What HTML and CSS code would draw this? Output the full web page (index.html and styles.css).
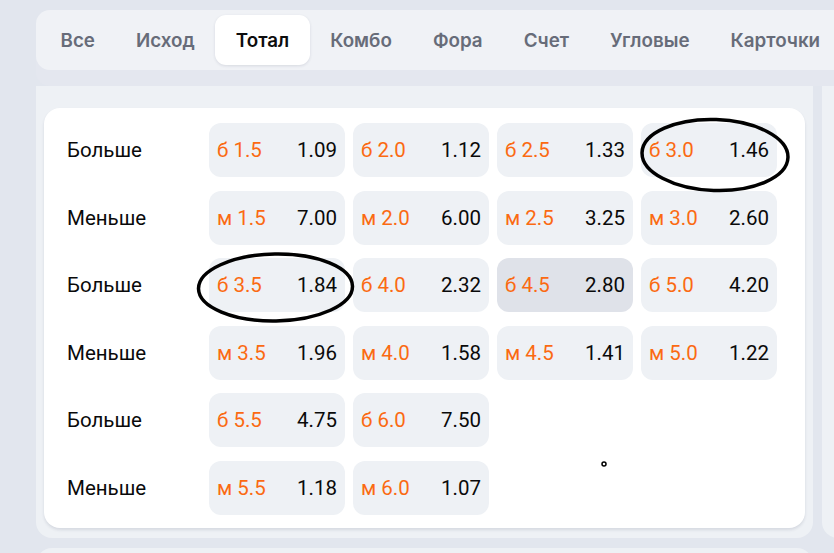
FILE: index.html
```html
<!DOCTYPE html>
<html lang="ru">
<head>
<meta charset="utf-8">
<link rel="stylesheet" href="styles.css">
</head>
<body>
<div class="page">
  <div class="header">
    <div class="tabs">
      <div class="tab">Все</div>
      <div class="tab">Исход</div>
      <div class="tab active">Тотал</div>
      <div class="tab">Комбо</div>
      <div class="tab">Фора</div>
      <div class="tab">Счет</div>
      <div class="tab">Угловые</div>
      <div class="tab">Карточки</div>
    </div>
  </div>
  <div class="columns">
    <div class="panel">
      <div class="card">
        <div class="row"><div class="label">Больше</div>
          <div class="cell"><span class="k">б 1.5</span><span class="v">1.09</span></div>
          <div class="cell"><span class="k">б 2.0</span><span class="v">1.12</span></div>
          <div class="cell"><span class="k">б 2.5</span><span class="v">1.33</span></div>
          <div class="cell"><span class="k">б 3.0</span><span class="v">1.46</span></div>
        </div>
        <div class="row"><div class="label">Меньше</div>
          <div class="cell"><span class="k">м 1.5</span><span class="v">7.00</span></div>
          <div class="cell"><span class="k">м 2.0</span><span class="v">6.00</span></div>
          <div class="cell"><span class="k">м 2.5</span><span class="v">3.25</span></div>
          <div class="cell"><span class="k">м 3.0</span><span class="v">2.60</span></div>
        </div>
        <div class="row"><div class="label">Больше</div>
          <div class="cell"><span class="k">б 3.5</span><span class="v">1.84</span></div>
          <div class="cell"><span class="k">б 4.0</span><span class="v">2.32</span></div>
          <div class="cell hover"><span class="k">б 4.5</span><span class="v">2.80</span></div>
          <div class="cell"><span class="k">б 5.0</span><span class="v">4.20</span></div>
        </div>
        <div class="row"><div class="label">Меньше</div>
          <div class="cell"><span class="k">м 3.5</span><span class="v">1.96</span></div>
          <div class="cell"><span class="k">м 4.0</span><span class="v">1.58</span></div>
          <div class="cell"><span class="k">м 4.5</span><span class="v">1.41</span></div>
          <div class="cell"><span class="k">м 5.0</span><span class="v">1.22</span></div>
        </div>
        <div class="row"><div class="label">Больше</div>
          <div class="cell"><span class="k">б 5.5</span><span class="v">4.75</span></div>
          <div class="cell"><span class="k">б 6.0</span><span class="v">7.50</span></div>
        </div>
        <div class="row"><div class="label">Меньше</div>
          <div class="cell"><span class="k">м 5.5</span><span class="v">1.18</span></div>
          <div class="cell"><span class="k">м 6.0</span><span class="v">1.07</span></div>
        </div>
      </div>
    </div>
    <div class="panel side"></div>
  </div>
  <div class="panel next"></div>
</div>
<svg class="marks" width="834" height="553" viewBox="0 0 834 553">
  <ellipse cx="715" cy="155" rx="73" ry="35.5" transform="rotate(2 715 155)" fill="none" stroke="#000" stroke-width="3.5"/>
  <ellipse cx="275.5" cy="287.5" rx="77" ry="33.5" transform="rotate(-1 275.5 287.5)" fill="none" stroke="#000" stroke-width="3.5"/>
  <circle cx="604" cy="464" r="2" fill="#fff" stroke="#000" stroke-width="1.5"/>
</svg>
</body>
</html>
```
FILE: styles.css
```css
* { box-sizing: border-box; }
html, body { margin: 0; padding: 0; }
body {
  background: #e2e6ee;
  font-family: Roboto, "Noto Sans", sans-serif;
  width: 834px;
  height: 553px;
  overflow: hidden;
  position: relative;
}
.page {
  padding: 10px 0 0 36px;
  width: 1000px;
  height: 553px;
  overflow: hidden;
}
.header {
  width: 960px;
  background: #e4e7ef;
  border-radius: 14px;
  padding-bottom: 16px;
}
.tabs {
  display: flex;
  background: #f0f2f6;
  border-radius: 14px;
  padding: 5px 4px;
}
.tab {
  height: 50px;
  display: flex;
  align-items: center;
  padding: 0 20.5px;
  font-family: Inter, Roboto, sans-serif;
  font-size: 18.8px;
  font-weight: 600;
  color: #676c79;
  border-radius: 11px;
}
.tab.active {
  background: #fff;
  color: #0d0d0d;
  box-shadow: 0 1px 3px rgba(30, 40, 70, 0.12);
}
.columns {
  display: flex;
  gap: 9px;
}
.panel {
  background: #eef1f5;
  border-radius: 0 0 16px 16px;
  width: 777px;
  flex: none;
  padding: 22px 8px 10px 8px;
}
.panel.side {
  width: 200px;
}
.panel.next {
  margin-top: 10px;
  height: 40px;
  border-radius: 16px 16px 0 0;
}
.card {
  background: #fff;
  border-radius: 16px;
  box-shadow: 0 2px 3px rgba(40, 50, 80, 0.12);
  padding: 15px 23px 13px 23px;
  display: flex;
  flex-direction: column;
  gap: 13.5px;
}
.row {
  display: flex;
  align-items: center;
  gap: 8px;
  height: 54px;
}
.label {
  width: 134px;
  font-size: 20.5px;
  color: #0a0a0a;
}
.cell {
  width: 136px;
  height: 54px;
  background: #eef1f5;
  border-radius: 12px;
  display: flex;
  align-items: center;
  justify-content: space-between;
  padding: 0 8px 0 8px;
  font-size: 20.5px;
}
.cell.hover { background: #dfe2e9; }
.k { color: #fb6a12; }
.v { color: #0a0a0a; }
.marks {
  position: absolute;
  top: 0;
  left: 0;
  pointer-events: none;
}
```
